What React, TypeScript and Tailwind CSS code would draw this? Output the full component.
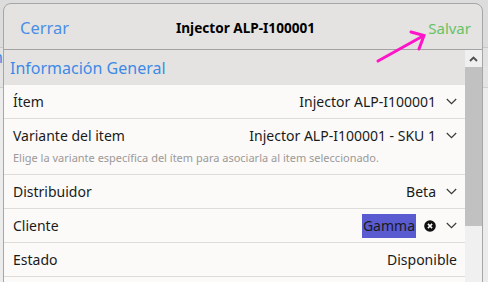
import React from 'react';

const font = { fontFamily: '"Noto Sans", "Open Sans", sans-serif' };

function Chevron() {
  return (
    <svg width="11" height="7" viewBox="0 0 11 7" className="shrink-0">
      <polyline points="0.8,1 5.5,5.6 10.2,1" fill="none" stroke="#3a3a3a" strokeWidth="1.2" />
    </svg>
  );
}

function ClearIcon() {
  return (
    <svg width="12" height="12" viewBox="0 0 12 12" className="shrink-0">
      <circle cx="6" cy="6" r="5.8" fill="#111" />
      <path d="M3.9 3.9 L8.1 8.1 M8.1 3.9 L3.9 8.1" stroke="#fff" strokeWidth="1.5" />
    </svg>
  );
}

type Row = { id: string; label: string; value: string; chevron?: boolean; help?: string; selected?: boolean };

const ROWS: Row[] = [
  { id: 'item', label: 'Ítem', value: 'Injector ALP-I100001', chevron: true },
  {
    id: 'variante',
    label: 'Variante del item',
    value: 'Injector ALP-I100001 - SKU 1',
    chevron: true,
    help: 'Elige la variante específica del ítem para asociarla al item seleccionado.',
  },
  { id: 'distribuidor', label: 'Distribuidor', value: 'Beta', chevron: true },
  { id: 'cliente', label: 'Cliente', value: 'Gamma', chevron: true, selected: true },
  { id: 'estado', label: 'Estado', value: 'Disponible' },
  { id: 'next', label: '', value: '' },
];

export default function App() {
  return (
    <div className="relative w-[488px] h-[282px] overflow-hidden bg-[#ececec]" style={font}>
      {/* page behind the dialog */}
      <div className="flex flex-col">
        <div className="h-[48px] bg-[#dcdcdc] border-b border-[#c8c8c8]" />
        <div className="h-[18px] bg-[#e2e2e2] flex items-center">
          <span className="text-[16px] text-[#3d8ae6] -ml-[7px] leading-none">n</span>
        </div>
        <div className="h-[22px] bg-[#e4e4e4] border-b border-[#d0d0d0]" />
      </div>

      {/* dialog */}
      <div className="absolute left-[3px] top-[3px] w-[480px] h-[300px] rounded-t-[8px] border border-[#a6a6a6] bg-[#e5e3e1] flex flex-col overflow-hidden">
        <div className="h-[46px] shrink-0 border-b border-[#a3a3a3] grid grid-cols-[1fr_auto_1fr] items-center pl-[16px] pr-[11px] pt-[3px]">
          <span className="text-[16.5px] text-[#4a8fe7]">Cerrar</span>
          <span className="text-[13.6px] font-bold text-black">Injector ALP-I100001</span>
          <span className="text-[15px] text-[#66c266] justify-self-end">Salvar</span>
        </div>

        <div className="flex flex-1 min-h-0">
          <div className="flex-1 flex flex-col">
            <div className="h-[35px] shrink-0 flex items-center pl-[6px] text-[16px] text-[#3d8ae6]">
              Información General
            </div>
            {ROWS.map((r) => (
              <div key={r.id} className="bg-[#fbfaf9] border-b border-[#dedcda] pl-[9px] pr-[8px]">
                <div className="h-[33px] flex items-center justify-between text-[14px] text-[#1a1a1a]">
                  <span>{r.label}</span>
                  <div className="flex items-center">
                    <span className={r.selected ? 'bg-[#5b5bd1] px-[1px] leading-[24px]' : ''}>{r.value}</span>
                    {r.selected && (
                      <span className="ml-[8px] flex">
                        <ClearIcon />
                      </span>
                    )}
                    {r.chevron && (
                      <span className="ml-[10px] flex">
                        <Chevron />
                      </span>
                    )}
                  </div>
                </div>
                {r.help && (
                  <div className="-mt-[1px] pb-[9px] text-[11px] leading-[14px] text-[#9b9997]">{r.help}</div>
                )}
              </div>
            ))}
          </div>

          {/* scrollbar */}
          <div className="w-[17px] shrink-0 flex flex-col bg-[#f0f0f0]">
            <div className="h-[17px] flex items-center justify-center">
              <svg width="9" height="6" viewBox="0 0 9 6">
                <polyline points="1,5 4.5,1.5 8,5" fill="none" stroke="#505050" strokeWidth="1.8" />
              </svg>
            </div>
            <div className="h-[159px] bg-[#c1c1c1]" />
          </div>
        </div>
      </div>

      {/* annotation arrow */}
      <svg className="absolute left-0 top-0 pointer-events-none" width="488" height="282">
        <g stroke="#ff14c8" strokeWidth="3" strokeLinecap="round" fill="none">
          <line x1="378" y1="61" x2="423" y2="36" />
          <polyline points="411,32 424,35.5 419,49" />
        </g>
      </svg>
    </div>
  );
}
